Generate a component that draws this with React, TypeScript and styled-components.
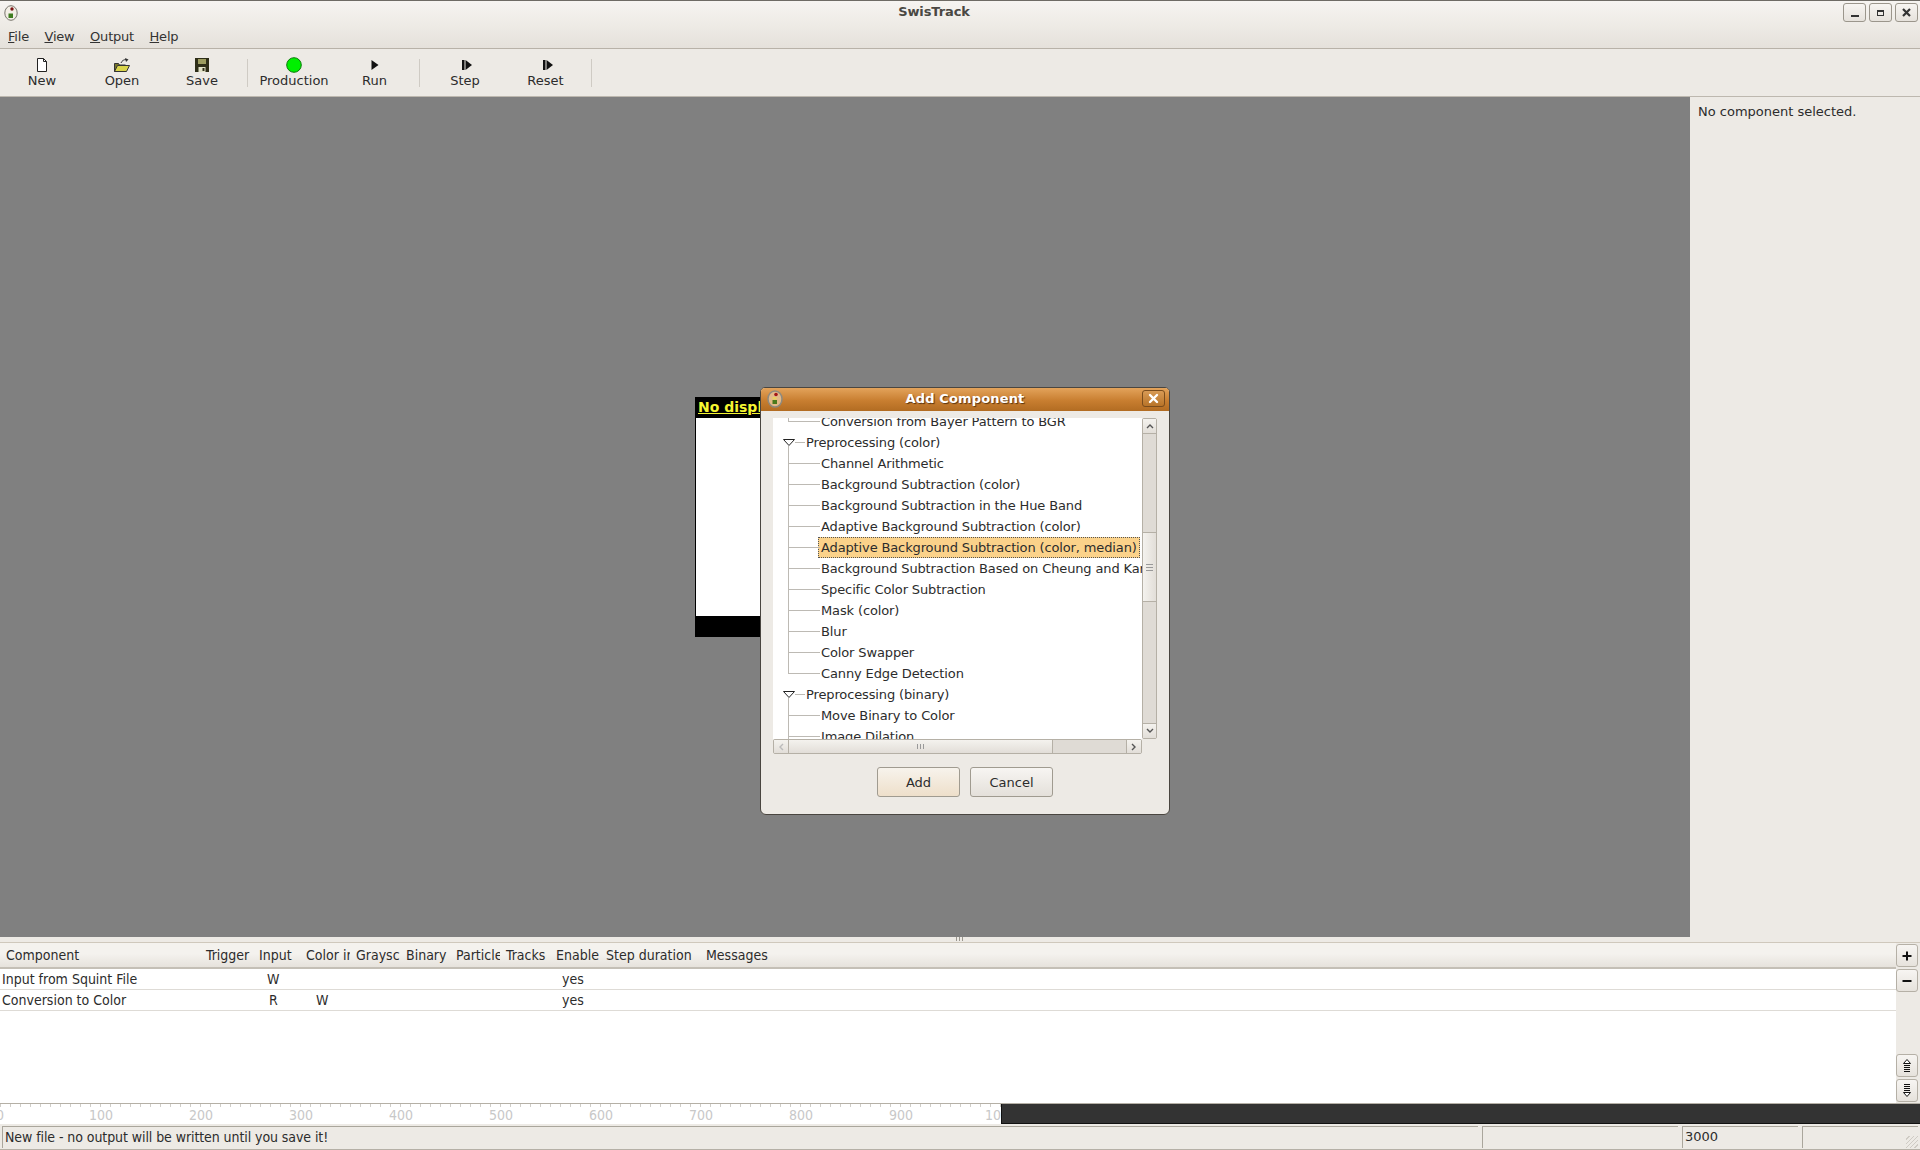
import styled, { createGlobalStyle } from 'styled-components';

const GlobalStyle = createGlobalStyle`
  html, body {
    margin: 0;
    padding: 0;
    background: #edeae5;
  }
  * {
    box-sizing: border-box;
  }
`;

const tools = [
  { label: 'New', width: 80, icon: 'new' },
  { label: 'Open', width: 80, icon: 'open' },
  { label: 'Save', width: 80, icon: 'save', sep: true },
  { label: 'Production', width: 82, icon: 'dot' },
  { label: 'Run', width: 79, icon: 'run', sep: true },
  { label: 'Step', width: 80, icon: 'step' },
  { label: 'Reset', width: 81, icon: 'step', sep: true },
];

const columns = [
  { label: 'Component', width: 200 },
  { label: 'Trigger', width: 53 },
  { label: 'Input', width: 47 },
  { label: 'Color ir', width: 50 },
  { label: 'Graysc', width: 50 },
  { label: 'Binary', width: 50 },
  { label: 'Particle', width: 50 },
  { label: 'Tracks', width: 50 },
  { label: 'Enable', width: 50 },
  { label: 'Step duration', width: 100 },
  { label: 'Messages', width: 100 },
];

const treeRows = [
  { label: 'Channel Arithmetic' },
  { label: 'Background Subtraction (color)' },
  { label: 'Background Subtraction in the Hue Band' },
  { label: 'Adaptive Background Subtraction (color)' },
  { label: 'Adaptive Background Subtraction (color, median)', selected: true },
  { label: 'Background Subtraction Based on Cheung and Kamath' },
  { label: 'Specific Color Subtraction' },
  { label: 'Mask (color)' },
  { label: 'Blur' },
  { label: 'Color Swapper' },
  { label: 'Canny Edge Detection', last: true },
];

const rulerValues = [0, 100, 200, 300, 400, 500, 600, 700, 800, 900, 1000];

function ToolIcon({ name }: { name: string }) {
  if (name === 'new') {
    return (
      <svg width="12" height="14" viewBox="0 0 12 14">
        <path d="M1.500 .5h6l3 3v10h-9z" fill="#fff" stroke="#222" />
        <path d="M7.500 .5v3h3" fill="none" stroke="#222" />
      </svg>
    );
  }
  if (name === 'open') {
    return (
      <svg width="16" height="14" viewBox="0 0 16 14">
        <path d="M.5 13.500v-8h4l1 1.500h6v6.500z" fill="#77752c" stroke="#333" />
        <path d="M.5 13.500l3-6h12l-3 6z" fill="#d9d44a" stroke="#333" />
        <path d="M7 5c1-2.500 3-3.500 5.500-3.500" fill="none" stroke="#333" />
        <path d="M11 0l3.500 1.500L12 4z" fill="#333" />
      </svg>
    );
  }
  if (name === 'save') {
    return (
      <svg width="14" height="14" viewBox="0 0 14 14">
        <rect x="0" y="0" width="14" height="14" fill="#2e2e18" />
        <rect x="3" y="1" width="8" height="5" fill="#9c9c60" />
        <rect x="3.500" y="9" width="7" height="5" fill="#e2e2c8" />
        <rect x="7.500" y="10" width="2" height="3" fill="#2e2e18" />
      </svg>
    );
  }
  if (name === 'dot') {
    return (
      <svg width="16" height="16" viewBox="0 0 16 16">
        <circle cx="8" cy="8" r="7.300" fill="#00f000" stroke="#0a7a0a" />
      </svg>
    );
  }
  if (name === 'run') {
    return (
      <svg width="8" height="10" viewBox="0 0 8 10">
        <path d="M0.500 0l7 5-7 5z" fill="#111" />
      </svg>
    );
  }
  return (
    <svg width="14" height="10" viewBox="-4 0 14 10">
      <rect x="0" y="0" width="2.500" height="10" fill="#111" />
      <path d="M3.500 0l6.500 5-6.500 5z" fill="#111" />
    </svg>
  );
}

function AppLogo() {
  return (
    <svg width="14" height="16" viewBox="0 0 14 16">
      <ellipse cx="7" cy="8" rx="6.200" ry="7.300" fill="#f3efe6" stroke="#77746c" />
      <circle cx="8" cy="4" r="1.700" fill="#7a1212" />
      <rect x="4.500" y="8.500" width="4.500" height="4.500" fill="#3f7d20" />
    </svg>
  );
}

function DialogIcon() {
  return (
    <svg width="16" height="18" viewBox="0 0 16 18">
      <ellipse cx="8" cy="9" rx="7" ry="8" fill="#e3b988" stroke="#8f8a7e" strokeWidth="1.500" />
      <circle cx="9" cy="4.500" r="1.800" fill="#a31818" />
      <rect x="5.500" y="7" width="4" height="2.500" fill="#e8d060" />
      <rect x="5.500" y="10" width="4.500" height="4" fill="#4b7a1c" />
    </svg>
  );
}

function Triangle() {
  return (
    <svg width="12" height="8" viewBox="0 0 12 8">
      <path d="M.5 .5h11L6 6.500z" fill="#fff" stroke="#222" />
    </svg>
  );
}

export default function App() {
  return (
    <Screen>
      <GlobalStyle />
      <TopBars>
        <TitleBar>
          <TitleLogo>
            <AppLogo />
          </TitleLogo>
          <TitleText>SwisTrack</TitleText>
          <WindowButtons>
            <WindowButton>
              <MinGlyph />
            </WindowButton>
            <WindowButton>
              <MaxGlyph />
            </WindowButton>
            <WindowButton>
              <svg width="11" height="11" viewBox="0 0 11 11">
                <path d="M2 2l7 7M9 2l-7 7" stroke="#333" strokeWidth="2.200" />
              </svg>
            </WindowButton>
          </WindowButtons>
        </TitleBar>
        <MenuBar>
          <MenuItem><u>F</u>ile</MenuItem>
          <MenuItem><u>V</u>iew</MenuItem>
          <MenuItem><u>O</u>utput</MenuItem>
          <MenuItem><u>H</u>elp</MenuItem>
        </MenuBar>
      </TopBars>

      <ToolBar>
        {tools.map((tool) => (
          <ToolGroup key={tool.label}>
            <ToolButton $width={tool.width}>
              <ToolIconBox>
                <ToolIcon name={tool.icon} />
              </ToolIconBox>
              {tool.label}
            </ToolButton>
            {tool.sep && <ToolSeparator />}
          </ToolGroup>
        ))}
      </ToolBar>

      <Middle>
        <Canvas>
          <Display>
            <DisplayHead>No display</DisplayHead>
            <DisplayBody />
            <DisplayFoot />
          </Display>
        </Canvas>
        <SidePanel>No component selected.</SidePanel>
      </Middle>

      <Sash>
        <SashGrip />
      </Sash>

      <ListArea>
        <ListMain>
          <HeaderRow>
            {columns.map((col) => (
              <HeaderCell key={col.label} $width={col.width}>{col.label}</HeaderCell>
            ))}
          </HeaderRow>
          <Row>
            <NameCell>Input from Squint File</NameCell>
            <MarkCell $left={267}>W</MarkCell>
            <MarkCell $left={562}>yes</MarkCell>
          </Row>
          <Row>
            <NameCell>Conversion to Color</NameCell>
            <MarkCell $left={269}>R</MarkCell>
            <MarkCell $left={316}>W</MarkCell>
            <MarkCell $left={562}>yes</MarkCell>
          </Row>
        </ListMain>
        <SideButtons>
          <SideButton>
            <svg width="12" height="12" viewBox="0 0 12 12">
              <path d="M6 1.500v9M1.500 6h9" stroke="#111" strokeWidth="2" />
            </svg>
          </SideButton>
          <SideButton>
            <svg width="12" height="12" viewBox="0 0 12 12">
              <path d="M1.500 6h9" stroke="#111" strokeWidth="2" />
            </svg>
          </SideButton>
          <SideSpacer />
          <SideButton>
            <svg width="10" height="13" viewBox="0 0 10 13">
              <path d="M5 .5L8.500 4.500h-7z" fill="#fff" stroke="#111" />
              <path d="M2 6.500h6M2 8.500h6M2 10.500h6M2 12.500h6" stroke="#111" />
            </svg>
          </SideButton>
          <SideButton>
            <svg width="10" height="13" viewBox="0 0 10 13">
              <path d="M2 .5h6M2 2.500h6M2 4.500h6M2 6.500h6" stroke="#111" />
              <path d="M5 12.500L8.500 8.500h-7z" fill="#fff" stroke="#111" />
            </svg>
          </SideButton>
        </SideButtons>
      </ListArea>

      <Timeline>
        <Ruler>
          {rulerValues.map((value) => (
            <RulerLabel key={value} $left={Math.round(value - String(value).length * 3.7)}>{value}</RulerLabel>
          ))}
        </Ruler>
        <TimelineDark />
      </Timeline>

      <StatusBar>
        <StatusCell $flex $narrow>New file - no output will be written until you save it!</StatusCell>
        <StatusCell $width={196} />
        <StatusCell $width={116}>3000</StatusCell>
        <StatusCell $width={116}>
          <Grip />
        </StatusCell>
      </StatusBar>

      <Dialog>
        <DialogTitle>
          <DialogLogo>
            <DialogIcon />
          </DialogLogo>
          Add Component
          <DialogClose>
            <svg width="11" height="11" viewBox="0 0 11 11">
              <path d="M2 2l7 7M9 2l-7 7" stroke="#fff" strokeWidth="2.400" strokeLinecap="round" />
            </svg>
          </DialogClose>
        </DialogTitle>
        <DialogBody>
          <TreeFrame>
            <TreeView>
              <TreeScroll>
                <TreeLeaf $last>Conversion from Bayer Pattern to BGR</TreeLeaf>
                <TreeGroup>
                  <Triangle />
                  <GroupConnector />
                  Preprocessing (color)
                </TreeGroup>
                {treeRows.map((row) => (
                  <TreeLeaf key={row.label} $last={row.last}>
                    <LeafText $selected={row.selected}>{row.label}</LeafText>
                  </TreeLeaf>
                ))}
                <TreeGroup>
                  <Triangle />
                  <GroupConnector />
                  Preprocessing (binary)
                </TreeGroup>
                <TreeLeaf>Move Binary to Color</TreeLeaf>
                <TreeLeaf>Image Dilation</TreeLeaf>
              </TreeScroll>
            </TreeView>
            <VScroll>
              <ScrollEnd>
                <svg width="8" height="6" viewBox="0 0 8 6"><path d="M1 5l3-3 3 3" fill="none" stroke="#555" strokeWidth="1.400" /></svg>
              </ScrollEnd>
              <VTrack>
                <VThumb>
                  <svg width="7" height="7" viewBox="0 0 7 7"><path d="M0 .5h7M0 3.500h7M0 6.500h7" stroke="#999" /></svg>
                </VThumb>
              </VTrack>
              <ScrollEnd>
                <svg width="8" height="6" viewBox="0 0 8 6"><path d="M1 1l3 3 3-3" fill="none" stroke="#555" strokeWidth="1.400" /></svg>
              </ScrollEnd>
            </VScroll>
          </TreeFrame>
          <HScroll>
            <HEnd>
              <svg width="6" height="8" viewBox="0 0 6 8"><path d="M5 1L2 4l3 3" fill="none" stroke="#bbb" strokeWidth="1.400" /></svg>
            </HEnd>
            <HThumb>
              <svg width="7" height="5" viewBox="0 0 7 5"><path d="M.5 0v5M3.500 0v5M6.500 0v5" stroke="#999" /></svg>
            </HThumb>
            <HTrack />
            <HEnd>
              <svg width="6" height="8" viewBox="0 0 6 8"><path d="M1 1l3 3-3 3" fill="none" stroke="#555" strokeWidth="1.400" /></svg>
            </HEnd>
          </HScroll>
          <DialogButtons>
            <PushButton $default>Add</PushButton>
            <PushButton>Cancel</PushButton>
          </DialogButtons>
        </DialogBody>
      </Dialog>
    </Screen>
  );
}

const Screen = styled.div`
  position: relative;
  display: flex;
  flex-direction: column;
  width: 1920px;
  height: 1150px;
  overflow: hidden;
  background: #edeae5;
  color: #1a1a1a;
  font-family: 'DejaVu Sans', sans-serif;
  font-size: 13px;
`;

const TopBars = styled.div`
  height: 49px;
  border-top: 1px solid #6e6b65;
  border-bottom: 1px solid #b8b2a8;
  background: linear-gradient(#f6f4f1 0%, #eeebe6 50%, #e5e1db 100%);
`;

const TitleBar = styled.div`
  position: relative;
  display: flex;
  align-items: center;
  justify-content: center;
  height: 21px;
  padding-right: 52px;
`;

const TitleLogo = styled.div`
  position: absolute;
  left: 4px;
  top: 4px;
  display: flex;
`;

const TitleText = styled.div`
  font-weight: 700;
  font-size: 13px;
  color: #4a4843;
  letter-spacing: -0.1px;
`;

const WindowButtons = styled.div`
  position: absolute;
  right: 2px;
  top: 2px;
  display: flex;
  gap: 3px;
`;

const WindowButton = styled.div`
  display: flex;
  align-items: center;
  justify-content: center;
  width: 23px;
  height: 19px;
  border: 1px solid #9b968c;
  border-radius: 3px;
  background: linear-gradient(#f7f5f2, #e6e2dc);
`;

const MinGlyph = styled.div`
  width: 8px;
  height: 2px;
  margin-top: 6px;
  background: #333;
`;

const MaxGlyph = styled.div`
  width: 7px;
  height: 6px;
  border: 1px solid #333;
  border-top-width: 2px;
`;

const MenuBar = styled.div`
  display: flex;
  padding: 2px 0 0 8px;
  gap: 15.500px;
  height: 26px;
  align-items: center;
  letter-spacing: -0.2px;
`;

const MenuItem = styled.div`
  color: #333;
`;

const ToolBar = styled.div`
  display: flex;
  height: 48px;
  padding-left: 2px;
  background: #edeae5;
  border-bottom: 1px solid #bdb8af;
`;

const ToolGroup = styled.div`
  display: flex;
  align-items: center;
`;

const ToolButton = styled.div<{ $width: number }>`
  display: flex;
  flex-direction: column;
  align-items: center;
  width: ${(p) => p.$width}px;
  padding-top: 8px;
  line-height: 15px;
  height: 100%;
  color: #2c2c2c;
`;

const ToolIconBox = styled.div`
  display: flex;
  align-items: center;
  justify-content: center;
  height: 16px;
`;

const ToolSeparator = styled.div`
  width: 1px;
  height: 28px;
  margin: 0 5px;
  background: #cfcbc4;
`;

const Middle = styled.div`
  flex: 1;
  display: flex;
  min-height: 0;
`;

const Canvas = styled.div`
  flex: 1;
  display: flex;
  align-items: center;
  justify-content: center;
  background: #808080;
`;

const Display = styled.div`
  display: flex;
  flex-direction: column;
  width: 300px;
  height: 240px;
  background: #000;
`;

const DisplayHead = styled.div`
  height: 21px;
  padding-left: 3px;
  color: #f5f531;
  font-weight: 700;
  font-size: 14px;
  line-height: 21px;
  text-decoration: underline;
`;

const DisplayBody = styled.div`
  flex: 1;
  margin-left: 1px;
  background: #fff;
`;

const DisplayFoot = styled.div`
  height: 21px;
`;

const SidePanel = styled.div`
  width: 230px;
  padding: 7px 8px;
  line-height: 16px;
  color: #2c2c2c;
`;

const Sash = styled.div`
  display: flex;
  align-items: flex-start;
  justify-content: center;
  height: 6px;
  border-bottom: 1px solid #cfc8bc;
`;

const SashGrip = styled.div`
  width: 8px;
  height: 4px;
  background: repeating-linear-gradient(90deg, #9a968e 0 1px, transparent 1px 3px);
`;

const ListArea = styled.div`
  display: flex;
  height: 160px;
`;

const ListMain = styled.div`
  flex: 1;
  background: #fff;
`;

const HeaderRow = styled.div`
  display: flex;
  height: 26px;
  align-items: center;
  background: linear-gradient(#f4f2ee 45%, #e6e2dc 100%);
  border-bottom: 2px solid #c4bfb6;
  font-size: 14px;
  font-stretch: condensed;
`;

const HeaderCell = styled.div<{ $width: number }>`
  width: ${(p) => p.$width}px;
  padding-left: 6px;
  overflow: hidden;
  white-space: nowrap;
  color: #2c2c2c;
`;

const Row = styled.div`
  position: relative;
  height: 21px;
  border-bottom: 1px solid #dedbd6;
  line-height: 20px;
  font-size: 14px;
  font-stretch: condensed;
  color: #2c2c2c;
`;

const NameCell = styled.span`
  padding-left: 2px;
`;

const MarkCell = styled.span<{ $left: number }>`
  position: absolute;
  left: ${(p) => p.$left}px;
  top: 0;
`;

const SideButtons = styled.div`
  display: flex;
  flex-direction: column;
  gap: 2px;
  width: 24px;
  padding: 1px 2px 1px 0;
  background: #edeae5;
`;

const SideButton = styled.div`
  display: flex;
  align-items: center;
  justify-content: center;
  height: 23px;
  border: 1px solid #b5b0a6;
  border-radius: 3px;
  background: linear-gradient(#f7f5f2, #e6e2dc);
`;

const SideSpacer = styled.div`
  flex: 1;
`;

const Timeline = styled.div`
  display: flex;
  height: 21px;
  border-top: 1px solid #b5b0a6;
  background: #fff;
`;

const Ruler = styled.div`
  position: relative;
  width: 1001px;
  overflow: hidden;
  background: repeating-linear-gradient(90deg, #cfcdc8 0 1px, transparent 1px 10px) top / 100% 3px no-repeat;
`;

const RulerLabel = styled.span<{ $left: number }>`
  position: absolute;
  left: ${(p) => p.$left}px;
  top: 3px;
  color: #c8c8c8;
  font-size: 14px;
  line-height: 16px;
  font-stretch: condensed;
`;

const TimelineDark = styled.div`
  flex: 1;
  background: #333;
  border-left: 1px solid #111;
  border-bottom: 1px solid #111;
`;

const StatusBar = styled.div`
  display: flex;
  gap: 4px;
  height: 26px;
  padding: 2px 2px 1px 2px;
  border-bottom: 1px solid #b5b0a6;
`;

const StatusCell = styled.div<{ $flex?: boolean; $width?: number; $narrow?: boolean }>`
  position: relative;
  ${(p) => (p.$flex ? 'flex: 1;' : `width: ${p.$width}px;`)}
  ${(p) => (p.$narrow ? 'font-size: 14px; font-stretch: condensed; letter-spacing: -0.08px;' : '')}
  padding-left: 2px;
  border-top: 1px solid #aaa69c;
  border-left: 1px solid #aaa69c;
  line-height: 20px;
  color: #2c2c2c;
`;

const Grip = styled.div`
  position: absolute;
  right: 0;
  bottom: 0;
  width: 12px;
  height: 12px;
  background: repeating-linear-gradient(135deg, transparent 0 2px, #cfcbc4 2px 3px);
`;

const Dialog = styled.div`
  position: absolute;
  left: 760px;
  top: 387px;
  display: flex;
  flex-direction: column;
  width: 410px;
  height: 428px;
  border: 1px solid #4a4640;
  border-radius: 5px 5px 6px 6px;
  background: #edeae5;
  overflow: hidden;
`;

const DialogTitle = styled.div`
  position: relative;
  display: flex;
  align-items: center;
  justify-content: center;
  height: 23px;
  padding-bottom: 3px;
  background: linear-gradient(#e3a35b, #c87e30 55%, #b26c22);
  color: #fff;
  font-weight: 700;
  font-size: 13px;
  letter-spacing: 0.15px;
  text-shadow: 1px 1px 1px #5a3410;
`;

const DialogLogo = styled.div`
  position: absolute;
  left: 6px;
  top: 2px;
  display: flex;
`;

const DialogClose = styled.div`
  position: absolute;
  right: 4px;
  top: 2px;
  display: flex;
  align-items: center;
  justify-content: center;
  width: 23px;
  height: 17px;
  border: 1px solid #7a4c1c;
  border-radius: 3px;
  background: linear-gradient(#d89a55, #b87428);
`;

const DialogBody = styled.div`
  flex: 1;
  display: flex;
  flex-direction: column;
  padding: 7px 12px 0 12px;
  min-height: 0;
`;

const TreeFrame = styled.div`
  display: flex;
  height: 321px;
`;

const TreeView = styled.div`
  position: relative;
  flex: 1;
  overflow: hidden;
  background: #fff;
  letter-spacing: -0.13px;
`;

const TreeScroll = styled.div`
  position: absolute;
  top: -7px;
  left: 0;
  right: 0;
`;

const TreeGroup = styled.div`
  position: relative;
  display: flex;
  align-items: center;
  height: 21px;
  padding-left: 10px;
  white-space: nowrap;
  color: #2c2c2c;

  &::after {
    content: '';
    position: absolute;
    left: 15px;
    top: 14px;
    bottom: 0;
    width: 1px;
    background: #bdbab4;
  }
`;

const GroupConnector = styled.span`
  width: 10px;
  height: 1px;
  margin-right: 1px;
  background: #bdbab4;
`;

const TreeLeaf = styled.div<{ $last?: boolean }>`
  position: relative;
  display: flex;
  align-items: center;
  height: 21px;
  padding-left: 48px;
  white-space: nowrap;
  color: #2c2c2c;

  &::before {
    content: '';
    position: absolute;
    left: 15px;
    top: 0;
    bottom: ${(p) => (p.$last ? '10px' : '0')};
    width: 1px;
    background: #bdbab4;
  }

  &::after {
    content: '';
    position: absolute;
    left: 15px;
    top: 10px;
    width: 32px;
    height: 1px;
    background: #bdbab4;
  }
`;

const LeafText = styled.span<{ $selected?: boolean }>`
  display: block;
  width: ${(p) => (p.$selected ? '322px' : 'auto')};
  margin-left: ${(p) => (p.$selected ? '-3px' : '0')};
  padding-left: ${(p) => (p.$selected ? '3px' : '0')};
  line-height: 21px;
  overflow: ${(p) => (p.$selected ? 'hidden' : 'visible')};
  background: ${(p) => (p.$selected ? '#fbd28a' : 'transparent')};
  outline: ${(p) => (p.$selected ? '1px dotted #555' : 'none')};
  outline-offset: -1px;
`;

const VScroll = styled.div`
  display: flex;
  flex-direction: column;
  width: 15px;
  border: 1px solid #b5b0a6;
  border-radius: 2px;
  background: #dfdbd5;
`;

const ScrollEnd = styled.div`
  display: flex;
  align-items: center;
  justify-content: center;
  height: 14px;
  background: linear-gradient(#f4f2ee, #e2ded8);
`;

const VTrack = styled.div`
  flex: 1;
  padding-top: 98px;
  border-top: 1px solid #b5b0a6;
  border-bottom: 1px solid #b5b0a6;
`;

const VThumb = styled.div`
  display: flex;
  align-items: center;
  justify-content: center;
  height: 70px;
  border-top: 1px solid #b5b0a6;
  border-bottom: 1px solid #b5b0a6;
  background: linear-gradient(90deg, #f4f2ee, #e2ded8);
`;

const HScroll = styled.div`
  display: flex;
  height: 15px;
  width: 369px;
  border: 1px solid #b5b0a6;
  border-radius: 2px;
  background: #dfdbd5;
`;

const HEnd = styled.div`
  display: flex;
  align-items: center;
  justify-content: center;
  width: 14px;
  background: linear-gradient(#f4f2ee, #e2ded8);
`;

const HThumb = styled.div`
  display: flex;
  align-items: center;
  justify-content: center;
  width: 265px;
  border-left: 1px solid #b5b0a6;
  border-right: 1px solid #b5b0a6;
  background: linear-gradient(#f4f2ee, #e2ded8);
`;

const HTrack = styled.div`
  flex: 1;
  border-right: 1px solid #b5b0a6;
`;

const DialogButtons = styled.div`
  display: flex;
  justify-content: center;
  gap: 10px;
  margin-top: 13px;
`;

const PushButton = styled.div<{ $default?: boolean }>`
  display: flex;
  align-items: center;
  justify-content: center;
  width: 83px;
  height: 30px;
  border: 1px solid #a09b90;
  border-radius: 3px;
  background: ${(p) =>
    p.$default
      ? 'linear-gradient(#f7f3ec, #eedfca)'
      : 'linear-gradient(#f7f5f2, #e4e0da)'};
  color: #2c2c2c;
`;
